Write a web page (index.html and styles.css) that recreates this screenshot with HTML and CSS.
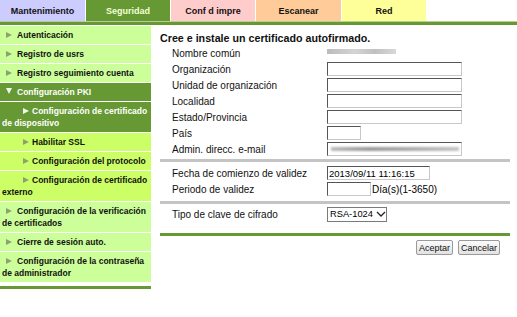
FILE: index.html
```html
<!DOCTYPE html>
<html lang="es">
<head>
<meta charset="utf-8">
<title>Seguridad</title>
<link rel="stylesheet" href="styles.css">
</head>
<body>
<div class="tabs">
  <div class="tab t-maint">Mantenimiento</div>
  <div class="tab t-sec">Seguridad</div>
  <div class="tab t-print">Conf d impre</div>
  <div class="tab t-scan">Escanear</div>
  <div class="tab t-net">Red</div>
</div>
<div class="topline"></div>
<div class="main">
  <nav class="side">
    <div class="item"><span class="arr"></span>Autenticación</div>
    <div class="item"><span class="arr"></span>Registro de usrs</div>
    <div class="item"><span class="arr"></span>Registro seguimiento cuenta</div>
    <div class="item dark"><span class="arr down"></span>Configuración PKI</div>
    <div class="item dark sub"><span class="arr"></span>Configuración de certificado de dispositivo</div>
    <div class="item lime sub"><span class="arr"></span>Habilitar SSL</div>
    <div class="item lime sub"><span class="arr"></span>Configuración del protocolo</div>
    <div class="item lime sub"><span class="arr"></span>Configuración de certificado externo</div>
    <div class="item"><span class="arr"></span>Configuración de la verificación de certificados</div>
    <div class="item"><span class="arr"></span>Cierre de sesión auto.</div>
    <div class="item"><span class="arr"></span>Configuración de la contraseña de administrador</div>
    <div class="side-end"></div>
  </nav>
  <section class="content">
    <h1 class="title">Cree e instale un certificado autofirmado.</h1>
    <div class="rows">
      <div class="row"><span class="lbl">Nombre común</span><span class="blur-val"></span></div>
      <div class="row"><span class="lbl">Organización</span><span class="inp wide"></span></div>
      <div class="row"><span class="lbl">Unidad de organización</span><span class="inp wide"></span></div>
      <div class="row"><span class="lbl">Localidad</span><span class="inp wide"></span></div>
      <div class="row"><span class="lbl">Estado/Provincia</span><span class="inp wide"></span></div>
      <div class="row"><span class="lbl">País</span><span class="inp short"></span></div>
      <div class="row"><span class="lbl">Admin. direcc. e-mail</span><span class="inp wide"><span class="blur-in"></span></span></div>
    </div>
    <div class="sep"></div>
    <div class="rows">
      <div class="row"><span class="lbl">Fecha de comienzo de validez</span><span class="inp date">2013/09/11 11:16:15</span></div>
      <div class="row"><span class="lbl">Periodo de validez</span><span class="inp days"></span><span class="unit">Día(s)(1-3650)</span></div>
    </div>
    <div class="sep sep2"></div>
    <div class="rows">
      <div class="row"><span class="lbl">Tipo de clave de cifrado</span><span class="select">RSA-1024<svg class="chev" width="10" height="6" viewBox="0 0 10 6"><path d="M1 1 L5 5 L9 1" fill="none" stroke="#222" stroke-width="1.3"/></svg></span></div>
    </div>
    <div class="gline"></div>
    <div class="buttons">
      <span class="btn">Aceptar</span>
      <span class="btn">Cancelar</span>
    </div>
  </section>
</div>
</body>
</html>
```
FILE: styles.css
```css
* { box-sizing: border-box; }
html, body { margin: 0; padding: 0; background: #fff; }
body { font-family: "Liberation Sans", Arial, sans-serif; color: #000; width: 517px; }

.tabs { display: flex; gap: 1px; height: 21px; }
.tab {
  display: flex; align-items: center; justify-content: center;
  font-weight: bold; font-size: 9px; color: #111;
  width: 84px; height: 21px;
}
.t-maint { width: 85px; background: #ccccff; }
.t-sec { background: #669933; color: #f2ffd6; }
.t-print { background: #ffcccc; }
.t-scan { width: 85px; background: #ffcc99; }
.t-net { background: #ffff99; }

.topline { height: 4px; border-top: 1px solid #b3d191; background: #669933; }

.main { display: flex; align-items: flex-start; padding-top: 1px; }

.side { width: 151px; flex: none; display: flex; flex-direction: column; gap: 1px; }
.item {
  background: #ccff99; font-weight: bold; font-size: 8.5px; line-height: 12px;
  padding: 3px 0 3px 2px; color: #111;
}
.item.dark { background: #669933; color: #fff; }
.item.lime { background: #ccff66; }
.arr {
  display: inline-block; width: 0; height: 0; vertical-align: 0;
  border-left: 6px solid #8fa070; border-top: 3px solid transparent; border-bottom: 3px solid transparent;
  margin: 0 5px 0 4px;
}
.dark .arr { border-left-color: #f3f8ea; }
.arr.down {
  border-left: 3px solid transparent; border-right: 3px solid transparent;
  border-top: 6px solid #f3f8ea; border-bottom: 0; margin: 0 5px 1px 4px;
}
.sub .arr { margin-left: 21px; margin-right: 3px; }
.side-end { height: 3px; background: #669933; margin-top: 3px; }

.content { margin-left: 9px; width: 350px; padding-top: 5px; }
.title { margin: 0; font-size: 10.7px; font-weight: bold; line-height: 14px; height: 14px; color: #111; }
.rows { display: flex; flex-direction: column; }
.row { display: flex; align-items: center; height: 16px; font-size: 10px; }
.lbl { width: 167px; padding-left: 12px; flex: none; color: #111; }
.inp {
  display: inline-flex; align-items: center; height: 14px; background: #fff;
  border-top: 1px solid #555; border-left: 1px solid #555;
  border-right: 1px solid #c8c8c8; border-bottom: 1px solid #c8c8c8;
  font-size: 9.5px; padding-left: 1px; overflow: hidden; white-space: nowrap;
}
.inp.wide { width: 135px; }
.inp.short { width: 34px; }
.inp.date { width: 103px; }
.inp.days { width: 44px; }
.unit { font-size: 10px; margin-left: 1px; }
.blur-val {
  width: 69px; height: 5px; background: linear-gradient(90deg, #bbb, #d4d4d4 40%, #c0c0c0 70%, #d8d8d8);
  filter: blur(0.6px); margin-top: -3px;
}
.blur-in {
  display: block; width: 128px; height: 4px; margin-left: 2px;
  background: linear-gradient(90deg, #bbb, #999 30%, #aaa 60%, #c4c4c4);
  filter: blur(1px);
}

.sep { height: 3px; background: #c4c4c4; margin: 2px 0 3px 0; }
.sep2 { margin: 4px 0 2px 0; }

.select {
  display: inline-flex; align-items: center; width: 60px; height: 15px; white-space: nowrap;
  border: 1px solid #7a7a7a; font-size: 9.3px; padding-left: 2px; gap: 3px; background: #fff;
}
.chev { flex: none; }

.gline { height: 3px; background: #669933; margin-top: 11px; }
.buttons { display: flex; justify-content: flex-end; gap: 5px; margin-top: 4px; padding-right: 10px; }
.btn {
  display: inline-flex; align-items: center; justify-content: center; height: 15px;
  padding: 0 2px; font-size: 9px; border: 1px solid #9a9a9a; border-radius: 2px;
  background: linear-gradient(#fbfbfb, #e2e2e2); color: #111;
}
```
